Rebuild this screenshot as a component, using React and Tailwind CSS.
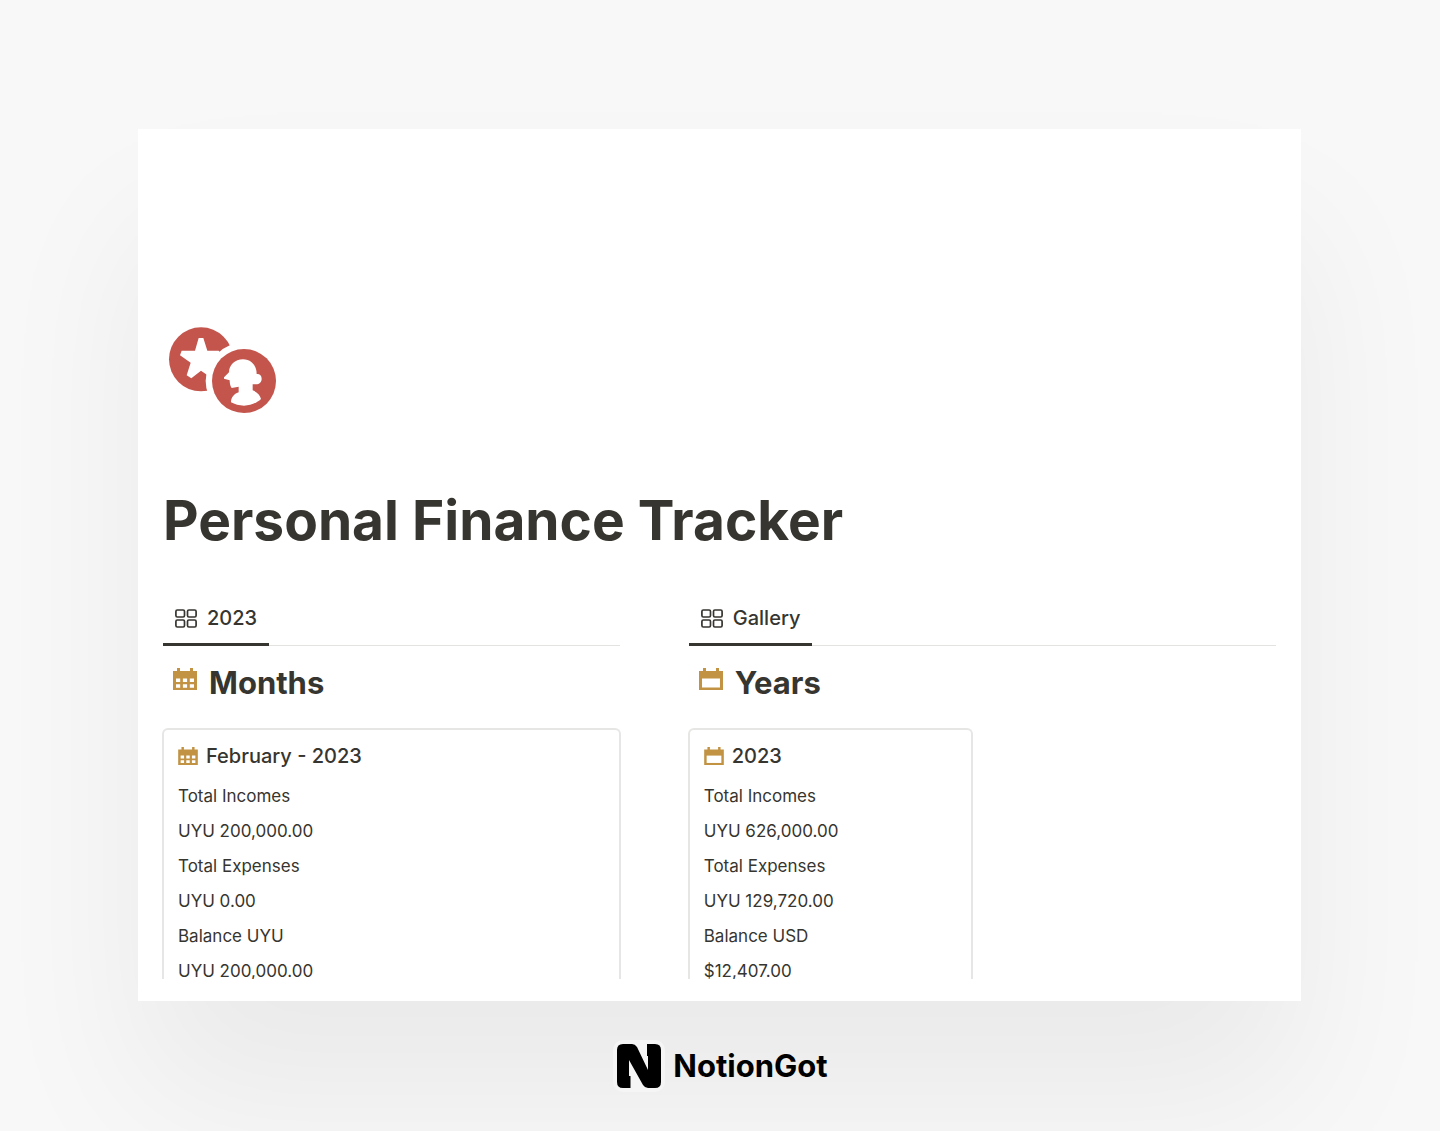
const months = {
    title: "February - 2023",
    rows: ["Total Incomes", "UYU 200,000.00", "Total Expenses", "UYU 0.00", "Balance UYU", "UYU 200,000.00"]
};

const years = {
    title: "2023",
    rows: ["Total Incomes", "UYU 626,000.00", "Total Expenses", "UYU 129,720.00", "Balance USD", "$12,407.00"]
};

function CoinsIcon() {
    return (
        <svg viewBox="54 48 327 264" className="w-[109px] h-[88px]" aria-hidden="true">
            <circle cx="153" cy="148" r="96" fill="#c4554d" />
            <path
                d="M146 84H160L172 122H206L215 132L186 160L188 206L153 182L124 205L110 196L122 158L90 136L95 122H135Z"
                fill="#fff"
            />
            <circle cx="282" cy="213" r="115" fill="#fff" />
            <circle cx="282" cy="213" r="96" fill="#c4554d" />
            <path
                d="M279 148C304 148 320 167 320 192C329 191 335 197 335 206C335 216 328 223 318 223H308V241C321 246 330 254 333 267C319 280 301 287 282 287C268 287 254 283 243 277C243 263 251 252 266 247V230L245 234C240 228 239 219 239 211L222 206V202L237 187C237 165 255 148 279 148Z"
                fill="#fff"
            />
        </svg>
    );
}

function GalleryIcon() {
    return (
        <svg viewBox="0 0 22 19" className="w-[22px] h-[19px]" fill="none" stroke="#37352f" strokeWidth="1.7" aria-hidden="true">
            <rect x="0.9" y="1" width="8.6" height="7" rx="1.4" />
            <rect x="12.5" y="1" width="8.6" height="7" rx="1.4" />
            <rect x="0.9" y="11" width="8.6" height="7" rx="1.4" />
            <rect x="12.5" y="11" width="8.6" height="7" rx="1.4" />
        </svg>
    );
}

function CalendarIcon({ days, className }) {
    return (
        <svg viewBox="0 0 24 22" className={className} aria-hidden="true">
            <path d="M0 3H4V0H7V3H17V0H20V3H24V22H0Z" fill="#c29343" />
            {days ? (
                <path
                    d="M3 10.5H7.2V14H3ZM9.9 10.5H14.1V14H9.9ZM16.8 10.5H21V14H16.8ZM3 16.2H7.2V19.7H3ZM9.9 16.2H14.1V19.7H9.9ZM16.8 16.2H21V19.7H16.8Z"
                    fill="#fff"
                />
            ) : (
                <path d="M3 10.5H21V19.5H3Z" fill="#fff" />
            )}
        </svg>
    );
}

function Column({ tab, heading, days, card, cardClass }) {
    return (
        <section>
            <div className="flex border-b border-[#e3e3e2]" role="tablist">
                <button
                    role="tab"
                    aria-selected="true"
                    className="flex items-center gap-[10px] h-12 pb-[5px] px-3 -mb-px border-b-3 border-[#37352f] text-[20px] leading-6 font-medium"
                >
                    <GalleryIcon />
                    {tab}
                </button>
            </div>

            <h2 className="flex items-center gap-3 mt-[17px] pl-[10px] text-[31px] leading-[40px] font-bold">
                <CalendarIcon days={days} className="w-6 h-[22px] mb-2" />
                {heading}
            </h2>

            {/* The card runs past the bottom of the page preview */}
            <div className="h-[251px] mt-[25px] -mx-px overflow-hidden">
                <article className={`border-2 border-b-0 border-[#e6e6e5] rounded-t-md px-[14px] pt-[14px] ${cardClass}`}>
                    <h3 className="flex items-center gap-2 text-[20px] leading-6 font-medium">
                        <CalendarIcon days={days} className="w-5 h-[18px]" />
                        {card.title}
                    </h3>
                    <ul className="mt-[11px] text-[17px] leading-[35px]">
                        {card.rows.map((row, i) => (
                            <li key={i}>{row}</li>
                        ))}
                    </ul>
                </article>
            </div>
        </section>
    );
}

function Logo() {
    return (
        <svg viewBox="0 0 52 52" className="w-[52px] h-[52px]" aria-hidden="true">
            <rect width="52" height="52" rx="10" fill="#f5f5f5" />
            <path
                d="M10 4H19Q22 4 24 7L35 30V16H34V4H42Q48 4 48 10V42Q48 48 42 48H35Q32 48 30 45L16 20V36H17.5V48H10Q4 48 4 42V10Q4 4 10 4Z"
                fill="#000"
            />
        </svg>
    );
}

export default function App() {
    return (
        <div className="min-h-screen overflow-hidden bg-[#f8f8f8] pl-[138px] pr-[139px] pt-[129px] pb-10 font-['Inter',sans-serif] text-[#37352f]">
            <main className="bg-white px-[25px] pt-[197px] pb-[22px] shadow-[0_100px_150px_rgba(0,0,0,0.06)]">
                <div className="pl-[5px]">
                    <CoinsIcon />
                </div>
                <h1 className="mt-[70px] text-[55px] leading-[72px] font-bold">Personal Finance Tracker</h1>

                <div className="grid grid-cols-[7fr_9fr] gap-[69px] mt-[42px]">
                    <Column tab="2023" heading="Months" days card={months} cardClass="" />
                    <Column tab="Gallery" heading="Years" card={years} cardClass="w-[285px]" />
                </div>
            </main>

            <footer className="relative flex items-center justify-center gap-2 mt-[39px] pl-[2px] text-[31px] leading-10 font-bold text-black">
                <Logo />
                <span>NotionGot</span>
            </footer>
        </div>
    );
}
